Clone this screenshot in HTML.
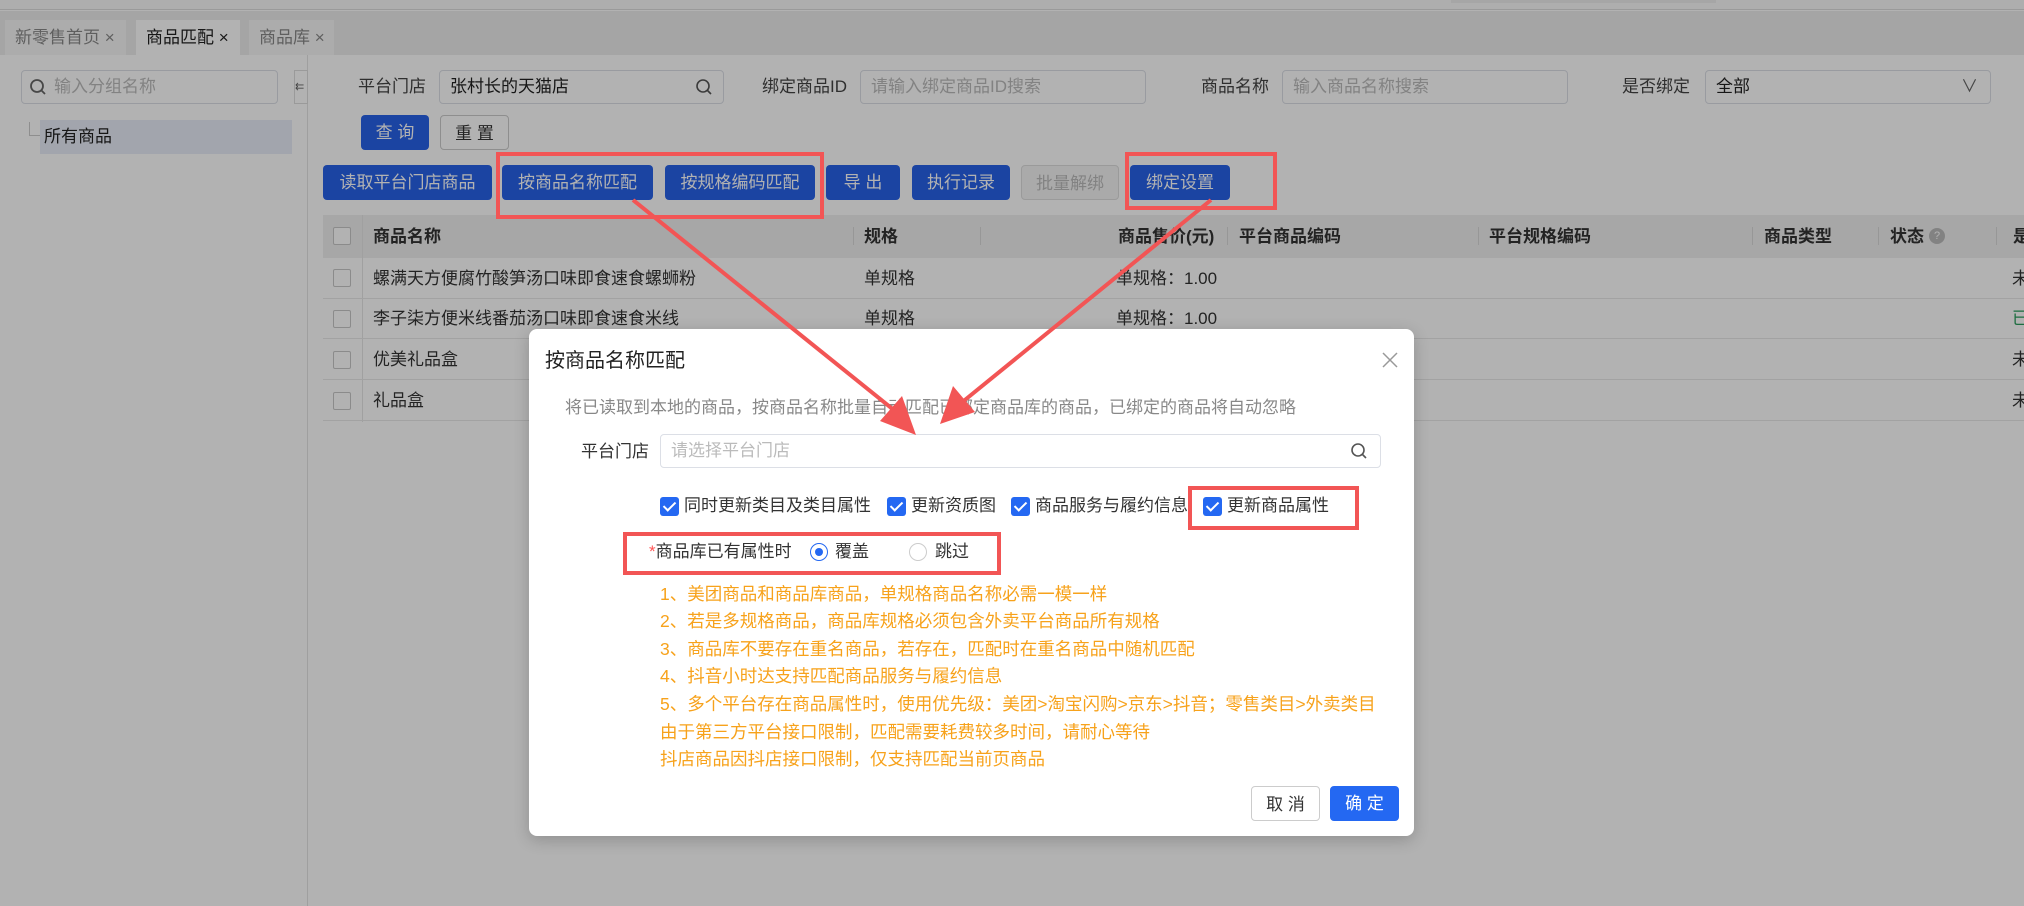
<!DOCTYPE html>
<html><head><meta charset="utf-8"><style>
*{box-sizing:border-box;margin:0;padding:0}
body{width:2024px;height:906px;position:relative;overflow:hidden;background:#fff;font-family:"Liberation Sans","Noto Sans CJK SC",sans-serif;color:#333;font-size:18px}
.a{position:absolute}
.inp{position:absolute;border:1px solid #dcdfe6;border-radius:4px;background:#fff;height:34px;line-height:32px;padding-left:10px;color:#bbb;font-size:17px}
.btn{position:absolute;background:#2862e8;color:#fff;border-radius:4px;height:35px;line-height:35px;text-align:center;font-size:17px}
.lbl{position:absolute;font-size:17px;color:#444;line-height:34px}
.th{position:absolute;top:215px;height:43px;line-height:43px;font-weight:bold;font-size:17px;color:#333}
.row{position:absolute;left:323px;width:1701px;height:41px;border-bottom:1px solid #e8e8e8}
.cb{position:absolute;width:18px;height:18px;border:1px solid #c8c8c8;border-radius:2px;background:#fff}
.td{position:absolute;font-size:17px;line-height:41px}
.dv{position:absolute;top:227px;width:1px;height:18px;background:#d8d8d8}
.chk{position:absolute;top:497px;width:19px;height:19px;border-radius:3px;background:#2468f2}
.chk:after{content:"";position:absolute;left:6px;top:2px;width:5px;height:10px;border:solid #fff;border-width:0 2px 2px 0;transform:rotate(45deg)}
.ct{position:absolute;top:494px;font-size:17px;color:#333;line-height:24px}
.or{position:absolute;left:660px;font-size:17.5px;color:#f7a21b;line-height:24px;white-space:nowrap}
.red{position:absolute;border:4px solid #f25555}
</style></head><body>
<!-- top -->
<div class="a" style="left:0;top:0;width:2024px;height:10px;background:#fafafa;border-bottom:1px solid #ddd"></div>
<div class="a" style="left:1451px;top:0;width:265px;height:3px;background:#eee"></div>
<div class="a" style="left:0;top:11px;width:2024px;height:44px;background:#ededed"></div>
<div class="a" style="left:5px;top:20px;width:121px;height:35px;background:#f7f7f7;line-height:35px;padding-left:10px;color:#888;font-size:17px">新零售首页 ×</div>
<div class="a" style="left:136px;top:20px;width:104px;height:35px;background:#fff;line-height:35px;padding-left:10px;color:#222;font-size:17px">商品匹配 ×</div>
<div class="a" style="left:249px;top:20px;width:85px;height:35px;background:#f7f7f7;line-height:35px;padding-left:10px;color:#888;font-size:17px">商品库 ×</div>
<!-- left -->
<div class="a" style="left:307px;top:55px;width:1px;height:851px;background:#e4e4e4"></div>
<div class="inp" style="left:21px;top:70px;width:257px;padding-left:32px">输入分组名称</div>
<svg class="a" style="left:29px;top:78px" width="18" height="18"><circle cx="8" cy="8" r="6" fill="none" stroke="#666" stroke-width="1.8"/><path d="M12 12l4 4" stroke="#666" stroke-width="1.8"/></svg>
<div class="a" style="left:294px;top:70px;width:14px;height:34px;border:1px solid #ddd;background:#fff;font-size:11px;line-height:32px;color:#666">⇇</div>
<div class="a" style="left:29px;top:122px;width:12px;height:14px;border-left:1px solid #ccc;border-bottom:1px solid #ccc"></div>
<div class="a" style="left:40px;top:120px;width:252px;height:34px;background:#e8ecf8;line-height:34px;padding-left:4px;font-size:17px;color:#222">所有商品</div>
<!-- filters -->
<div class="lbl" style="left:358px;top:70px">平台门店</div>
<div class="inp" style="left:439px;top:70px;width:285px;color:#222">张村长的天猫店</div>
<svg class="a" style="left:695px;top:78px" width="18" height="18"><circle cx="8" cy="8" r="6" fill="none" stroke="#555" stroke-width="1.6"/><path d="M12 12l4 4" stroke="#555" stroke-width="1.6"/></svg>
<div class="lbl" style="left:762px;top:70px">绑定商品ID</div>
<div class="inp" style="left:860px;top:70px;width:286px">请输入绑定商品ID搜索</div>
<div class="lbl" style="left:1201px;top:70px">商品名称</div>
<div class="inp" style="left:1282px;top:70px;width:286px">输入商品名称搜索</div>
<div class="lbl" style="left:1622px;top:70px">是否绑定</div>
<div class="inp" style="left:1705px;top:70px;width:286px;color:#222">全部<span style="position:absolute;right:12px;color:#666">∨</span></div>
<div class="btn" style="left:361px;top:115px;width:68px">查 询</div>
<div class="btn" style="left:440px;top:115px;width:69px;background:#fff;color:#333;border:1px solid #ccc">重 置</div>
<div class="btn" style="left:323px;top:165px;width:169px">读取平台门店商品</div>
<div class="btn" style="left:502px;top:165px;width:151px">按商品名称匹配</div>
<div class="btn" style="left:665px;top:165px;width:150px">按规格编码匹配</div>
<div class="btn" style="left:826px;top:165px;width:74px">导 出</div>
<div class="btn" style="left:912px;top:165px;width:98px">执行记录</div>
<div class="btn" style="left:1021px;top:165px;width:98px;background:#f4f4f4;color:#bbb;border:1px solid #ddd">批量解绑</div>
<div class="btn" style="left:1130px;top:165px;width:100px">绑定设置</div>
<!-- table -->
<div class="a" style="left:323px;top:215px;width:1701px;height:43px;background:#f0f0f0"></div>
<div class="cb" style="left:333px;top:227px"></div>
<div class="a" style="left:362px;top:215px;width:1px;height:207px;background:#e6e6e6"></div>
<div class="th" style="left:373px">商品名称</div>
<div class="dv" style="left:853px"></div><div class="th" style="left:864px">规格</div>
<div class="dv" style="left:980px"></div><div class="th" style="left:1118px">商品售价(元)</div>
<div class="dv" style="left:1227px"></div><div class="th" style="left:1239px">平台商品编码</div>
<div class="dv" style="left:1478px"></div><div class="th" style="left:1489px">平台规格编码</div>
<div class="dv" style="left:1752px"></div><div class="th" style="left:1764px">商品类型</div>
<div class="dv" style="left:1878px"></div><div class="th" style="left:1890px">状态</div>
<div class="a" style="left:1929px;top:228px;width:16px;height:16px;border-radius:50%;background:#bbb;color:#fff;font-size:11px;text-align:center;line-height:16px">?</div>
<div class="dv" style="left:1996px"></div><div class="th" style="left:2013px">是</div>
<div class="row" style="top:258px"></div><div class="row" style="top:298px"></div><div class="row" style="top:339px"></div><div class="row" style="top:380px"></div>
<div class="cb" style="left:333px;top:269px"></div><div class="cb" style="left:333px;top:310px"></div><div class="cb" style="left:333px;top:351px"></div><div class="cb" style="left:333px;top:392px"></div>
<div class="td" style="left:373px;top:258px">螺满天方便腐竹酸笋汤口味即食速食螺蛳粉</div>
<div class="td" style="left:373px;top:298px">李子柒方便米线番茄汤口味即食速食米线</div>
<div class="td" style="left:373px;top:339px">优美礼品盒</div>
<div class="td" style="left:373px;top:380px">礼品盒</div>
<div class="td" style="left:864px;top:258px">单规格</div><div class="td" style="left:864px;top:298px">单规格</div>
<div class="td" style="left:1116px;top:258px">单规格：1.00</div><div class="td" style="left:1116px;top:298px">单规格：1.00</div>
<div class="td" style="left:2012px;top:258px">未</div><div class="td" style="left:2012px;top:298px;color:#2a9d5c">已</div>
<div class="td" style="left:2012px;top:339px">未</div><div class="td" style="left:2012px;top:380px">未</div>
<!-- mask -->
<div class="a" style="left:0;top:0;width:2024px;height:906px;background:rgba(0,0,0,0.3)"></div>
<div class="red" style="left:496px;top:152px;width:328px;height:67px"></div>
<div class="red" style="left:1125px;top:152px;width:152px;height:58px"></div>
<!-- dialog -->
<div class="a" style="left:529px;top:329px;width:885px;height:507px;background:#fff;border-radius:8px;box-shadow:0 4px 16px rgba(0,0,0,.2)"></div>
<div class="a" style="left:545px;top:347px;font-size:20px;color:#222;line-height:28px">按商品名称匹配</div>
<svg class="a" style="left:1381px;top:351px" width="18" height="18"><path d="M2 2l14 14M16 2L2 16" stroke="#999" stroke-width="1.5"/></svg>
<div class="a" style="left:565px;top:396px;font-size:17px;color:#888;line-height:24px">将已读取到本地的商品，按商品名称批量自动匹配已绑定商品库的商品，已绑定的商品将自动忽略</div>
<div class="lbl" style="left:581px;top:435px;color:#333">平台门店</div>
<div class="inp" style="left:660px;top:434px;width:721px">请选择平台门店</div>
<svg class="a" style="left:1350px;top:442px" width="18" height="18"><circle cx="8" cy="8" r="6" fill="none" stroke="#555" stroke-width="1.6"/><path d="M12 12l4 4" stroke="#555" stroke-width="1.6"/></svg>
<div class="chk" style="left:660px"></div><div class="ct" style="left:684px">同时更新类目及类目属性</div>
<div class="chk" style="left:887px"></div><div class="ct" style="left:911px">更新资质图</div>
<div class="chk" style="left:1011px"></div><div class="ct" style="left:1035px">商品服务与履约信息</div>
<div class="chk" style="left:1203px"></div><div class="ct" style="left:1227px">更新商品属性</div>
<div class="red" style="left:1188px;top:486px;width:171px;height:44px"></div>
<div class="a" style="left:649px;top:540px;font-size:17px;line-height:24px;color:#333"><span style="color:#f55">*</span>商品库已有属性时</div>
<div class="a" style="left:810px;top:543px;width:18px;height:18px;border-radius:50%;border:1px solid #2468f2"><div style="position:absolute;left:4px;top:4px;width:8px;height:8px;border-radius:50%;background:#2468f2"></div></div>
<div class="a" style="left:835px;top:540px;font-size:17px;line-height:24px">覆盖</div>
<div class="a" style="left:909px;top:543px;width:18px;height:18px;border-radius:50%;border:1px solid #ccc"></div>
<div class="a" style="left:935px;top:540px;font-size:17px;line-height:24px">跳过</div>
<div class="red" style="left:623px;top:532px;width:378px;height:43px"></div>
<div class="or" style="top:582px">1、美团商品和商品库商品，单规格商品名称必需一模一样</div>
<div class="or" style="top:609px">2、若是多规格商品，商品库规格必须包含外卖平台商品所有规格</div>
<div class="or" style="top:637px">3、商品库不要存在重名商品，若存在，匹配时在重名商品中随机匹配</div>
<div class="or" style="top:664px">4、抖音小时达支持匹配商品服务与履约信息</div>
<div class="or" style="top:692px">5、多个平台存在商品属性时，使用优先级：美团&gt;淘宝闪购&gt;京东&gt;抖音；零售类目&gt;外卖类目</div>
<div class="or" style="top:720px">由于第三方平台接口限制，匹配需要耗费较多时间，请耐心等待</div>
<div class="or" style="top:747px">抖店商品因抖店接口限制，仅支持匹配当前页商品</div>
<div class="btn" style="left:1251px;top:786px;width:69px;background:#fff;color:#333;border:1px solid #ccc">取 消</div>
<div class="btn" style="left:1330px;top:786px;width:69px;background:#2468f2">确 定</div>
<!-- arrows -->
<svg class="a" style="left:0;top:0" width="2024" height="906">
<line x1="633" y1="200" x2="900" y2="415" stroke="#f25555" stroke-width="4"/>
<polygon points="916,435 880,421 902,396" fill="#f25555"/>
<line x1="1211" y1="200" x2="955" y2="408" stroke="#f25555" stroke-width="4"/>
<polygon points="940,424 953,386 975,412" fill="#f25555"/>
</svg>
</body></html>
